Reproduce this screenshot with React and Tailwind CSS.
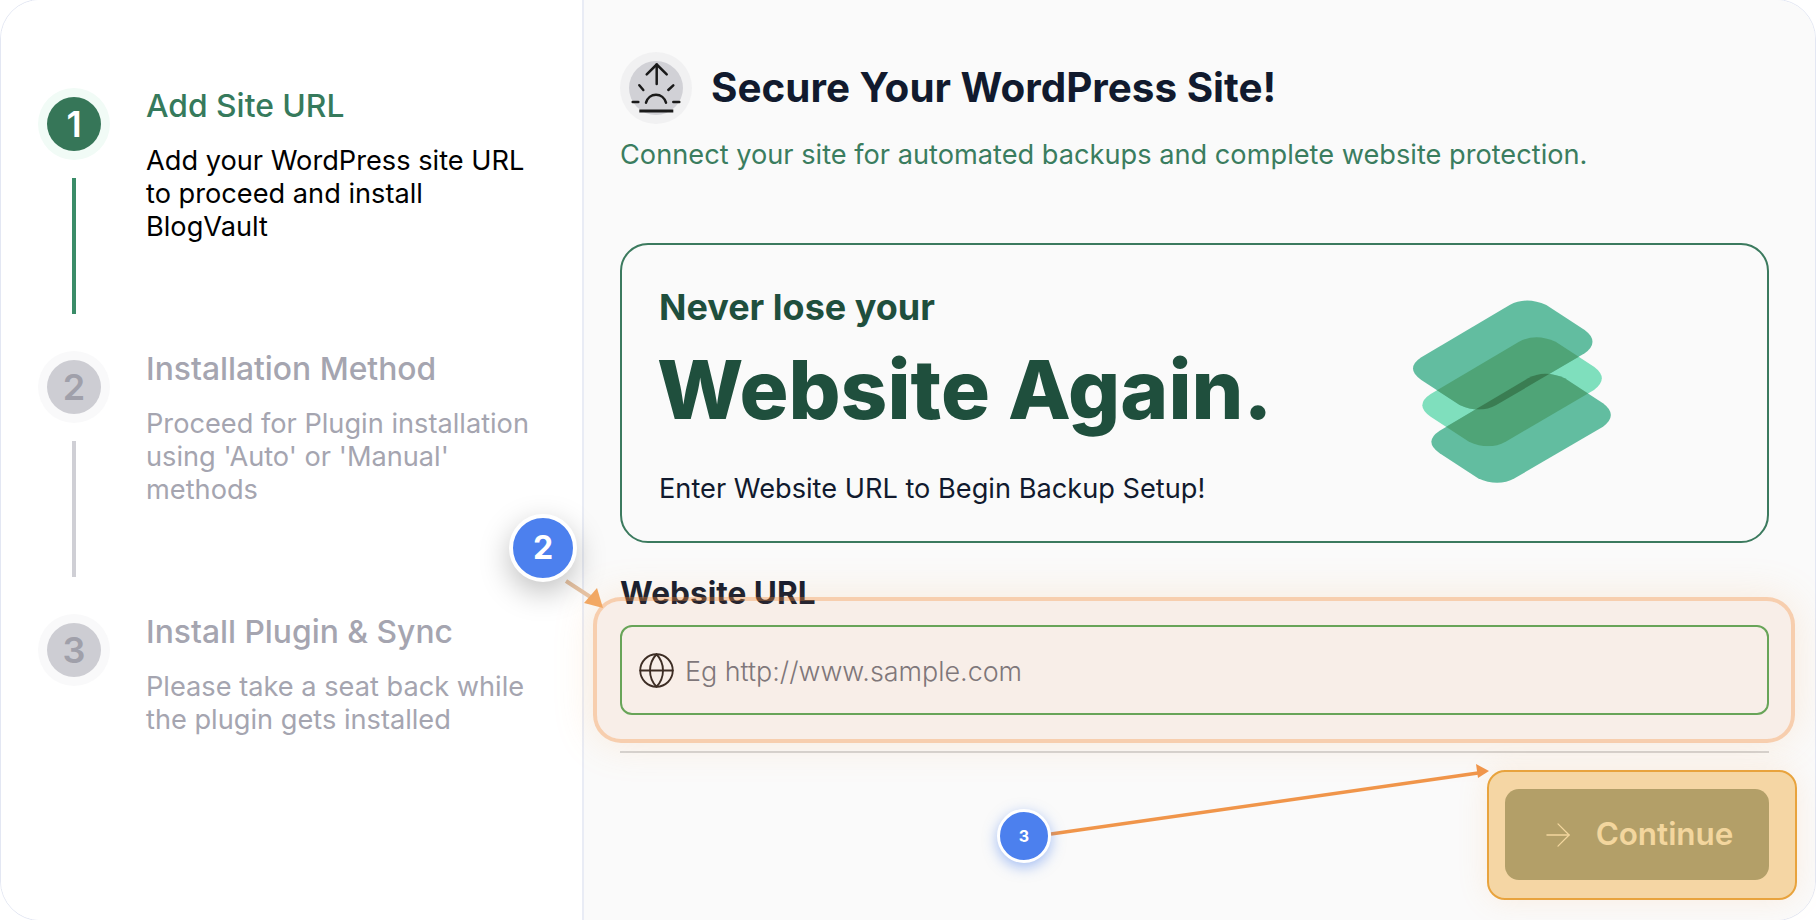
import React from 'react';
import { ArrowRight, Globe } from 'lucide-react';

const steps = [
  { n: 1, title: 'Add Site URL', desc: ['Add your WordPress site URL', 'to proceed and install', 'BlogVault'], active: true, line: true },
  { n: 2, title: 'Installation Method', desc: ['Proceed for Plugin installation', "using 'Auto' or 'Manual'", 'methods'], line: true },
  { n: 3, title: 'Install Plugin & Sync', desc: ['Please take a seat back while', 'the plugin gets installed'] },
];

const topShape = 'M185 262 L450 105 Q500 78 560 105 L675 180 Q722 215 675 250 L410 405 Q360 432 300 405 L185 330 Q135 295 185 262 Z';
const midShape = 'M213 372 L478 215 Q528 188 588 215 L703 290 Q750 325 703 360 L438 515 Q388 542 328 515 L213 440 Q163 405 213 372 Z';
const botShape = 'M240 482 L505 325 Q555 298 615 325 L730 400 Q777 435 730 470 L465 625 Q415 652 355 625 L240 550 Q190 515 240 482 Z';

const StackLogo = () => (
  <svg width="200" height="183" viewBox="157 90 600 549" fill="none" className="-mt-[4px]">
    <defs>
      <clipPath id="clip-mid"><path d={midShape} /></clipPath>
      <clipPath id="clip-top"><path d={topShape} /></clipPath>
    </defs>
    <path d={midShape} fill="#7fdfbd" />
    <path d={topShape} fill="#62bda0" />
    <path d={botShape} fill="#62bda0" />
    <g clipPath="url(#clip-mid)">
      <path d={topShape} fill="#4fa477" />
      <path d={botShape} fill="#4fa477" />
    </g>
    <g clipPath="url(#clip-top)">
      <path d={botShape} fill="#3a7d52" />
    </g>
  </svg>
);

// sunrise with a short ground line, drawn to the circle's own size
const UploadSun = () => (
  <svg width="54" height="54" viewBox="0 0 54 54" fill="none" stroke="#1a1a1a" strokeWidth="2.5" strokeLinecap="round" strokeLinejoin="round">
    <path d="M27.7 3.5V23" />
    <path d="M17.7 13.3 27.7 3.5l10 9.8" />
    <path d="M10.3 24.3 14.3 29" />
    <path d="M44.3 24.3 39.3 29" />
    <path d="M3.7 41h5.6" />
    <path d="M44.3 41h6" />
    <path d="M17 41.7a10.4 11 0 0 1 20 0" />
    <path d="M10.3 50h34" strokeWidth="2.8" strokeLinecap="butt" />
  </svg>
);

const Step = ({ step }) => (
  <div className="flex h-[263px] gap-[37px]">
    <div className="flex w-[72px] shrink-0 flex-col items-center">
      <div className={`flex h-[72px] w-[72px] items-center justify-center rounded-full ${step.active ? 'bg-[#f1fbf6]' : 'bg-[#f9f9fa]'}`}>
        <div className={`flex h-[54px] w-[54px] items-center justify-center rounded-full text-[36px] font-semibold ${step.active ? 'bg-[#367658] text-white' : 'bg-[#cdcdd3] text-[#a0a0aa]'}`}>
          {step.n}
        </div>
      </div>
      {step.line && <div className={`mt-[18px] w-1 h-[136px] ${step.active ? 'bg-[#3a8c68]' : 'bg-[#cfcfd5]'}`} />}
    </div>
    <div className="-ml-px">
      <h3 className={`text-[31.8px] leading-[36px] font-medium ${step.active ? 'text-[#367a5c]' : 'text-[#a5a5b0]'}`}>{step.title}</h3>
      <div className={`mt-[20px] text-[27.2px] leading-[33px] ${step.active ? 'text-black' : 'text-[#a5a5b0]'}`}>
        {step.desc.map((l) => <p key={l} className="whitespace-nowrap">{l}</p>)}
      </div>
    </div>
  </div>
);

export default function App() {
  return (
    <div className="relative h-screen w-full overflow-hidden bg-white font-['Inter',sans-serif]">
      <div className="-mt-px flex h-[922px] overflow-hidden rounded-[40px] border border-[#e3e7f3]">
        {/* Steps */}
        <aside className="w-[581px] shrink-0 bg-white pl-[37px] pt-[88px]">
          {steps.map((s) => <Step key={s.n} step={s} />)}
        </aside>

        {/* Form */}
        <main className="flex flex-1 flex-col border-l-2 border-[#e9ecf5] bg-[#fafafa] pl-[36px] pr-[46px] pt-[52px]">
          <div className="flex items-center gap-[19px]">
            <div className="flex h-[72px] w-[72px] items-center justify-center rounded-full bg-[#f1f1f2]">
              <div className="flex h-[54px] w-[54px] items-center justify-center rounded-full bg-[#d1d1d6]">
                <UploadSun />
              </div>
            </div>
            <h1 className="text-[40.4px] leading-[48px] font-bold text-[#111a2e]">Secure Your WordPress Site!</h1>
          </div>
          <p className="mt-[13px] text-[27.2px] leading-[36px] text-[#3a7d5f]">Connect your site for automated backups and complete website protection.</p>

          <section className="mt-[70px] flex h-[300px] items-center justify-between rounded-[28px] border-2 border-[#3b7a5e] pl-[37px] pr-[155px]">
            <div className="pt-[6px] text-[#1f4f3d]">
              <h2 className="text-[36px] leading-[44px] font-bold">Never lose your</h2>
              <div className="-ml-[2px] mt-[11px] text-[81.7px] leading-[100px] font-extrabold">Website Again.</div>
              <p className="mt-[31px] text-[27.2px] leading-[36px] text-[#111a2e]">Enter Website URL to Begin Backup Setup!</p>
            </div>
            <StackLogo />
          </section>

          <label className="mt-[34px] text-[31.6px] leading-[32px] font-bold text-[#111a2e]">Website URL</label>
          <div className="mt-[16px] flex h-[90px] items-center gap-[9px] rounded-[12px] border-2 border-[#5aa85a] pl-[15px]">
            <Globe size={39} strokeWidth={1.15} className="shrink-0 text-[#2a2320]" />
            <input
              type="text"
              placeholder="Eg http://www.sample.com"
              className="mt-[2px] w-full bg-transparent text-[26.9px] font-light outline-none placeholder:text-[#73757f]"
            />
          </div>

          <div className="mt-[36px] h-[2px] bg-[#d4d4d4]" />

          <button type="button" className="mt-[36px] flex h-[91px] w-[264px] items-center justify-center gap-[19px] self-end rounded-[14px] bg-[#81968c] pr-[2px] text-[31.4px] font-semibold text-[#f6f9ee]">
            <ArrowRight size={38} strokeWidth={0.8} />
            Continue
          </button>
        </main>
      </div>

      {/* Annotations */}
      <div className="pointer-events-none absolute left-[593px] top-[597px] h-[146px] w-[1202px] rounded-[28px] border-4 border-[#f28c3c]/40 bg-[#f08a50]/10 bg-clip-padding shadow-[0_0_40px_rgba(245,160,80,0.18)]" />
      <div className="pointer-events-none absolute left-[1487px] top-[770px] h-[130px] w-[310px] rounded-[18px] border-2 border-[#e8a33d] bg-[#f0aa3c]/45 shadow-[0_0_30px_rgba(245,160,80,0.15)]" />

      <svg className="pointer-events-none absolute left-0 top-0" width="1816" height="920" fill="none">
        <line x1="566" y1="581" x2="592" y2="598" stroke="#e8c4a4" strokeWidth="4" />
        <polygon points="603,608 584,603 597,588" fill="#f2a864" />
        <line x1="1051" y1="834" x2="1478" y2="773" stroke="#f0954a" strokeWidth="3.5" />
        <polygon points="1489,771 1476,764 1478,778" fill="#f0954a" />
      </svg>

      <div className="absolute left-[509px] top-[514px] flex h-[68px] w-[68px] items-center justify-center rounded-full border-4 border-white bg-[#4c80ee] text-[32px] font-bold text-white shadow-[0_10px_30px_rgba(0,0,0,0.25)]">2</div>
      <div className="absolute left-[997px] top-[809px] flex h-[54px] w-[54px] items-center justify-center rounded-full border-[3px] border-white bg-[#4c80ee] text-[16px] font-bold text-white shadow-[0_4px_14px_rgba(76,128,238,0.5)]">3</div>
    </div>
  );
}
